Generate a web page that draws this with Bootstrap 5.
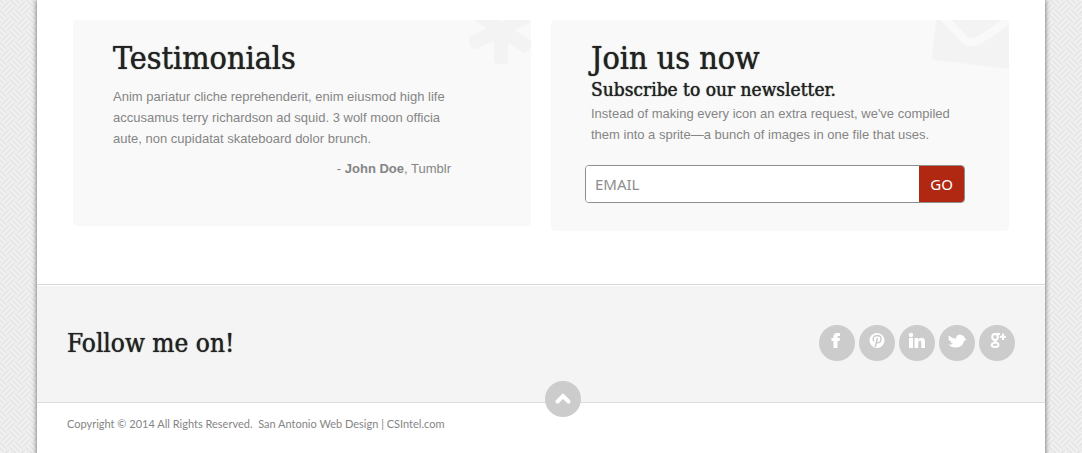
<!DOCTYPE html>
<html lang="en">
<head>
<meta charset="utf-8">
<meta name="viewport" content="width=device-width, initial-scale=1">
<title>Follow me on!</title>
<link href="https://cdn.jsdelivr.net/npm/bootstrap@5.3.0/dist/css/bootstrap.min.css" rel="stylesheet">
<style>
  body {
    font-family: "Liberation Sans", Arial, sans-serif;
    font-size: 13px;
    line-height: 21px;
    color: #858585;
    background: #f1f1f1 url("data:image/svg+xml,%3Csvg xmlns='http://www.w3.org/2000/svg' width='16' height='16' viewBox='0 0 12 12'%3E%3Cdefs%3E%3Cg id='b'%3E%3Cpath d='M-3-3L3 3M-1-5L5 1M-5-1L1 5'/%3E%3C/g%3E%3C/defs%3E%3Cg fill='none' stroke='%23e5e5e5' stroke-width='1.3'%3E%3Cpath d='M3 9L9 3M1 7L7 1M5 11L11 5'/%3E%3Cuse href='%23b'/%3E%3Cuse href='%23b' x='12'/%3E%3Cuse href='%23b' y='12'/%3E%3Cuse href='%23b' x='12' y='12'/%3E%3C/g%3E%3C/svg%3E");
  }
  .sheet { margin: 0 37px; background: #fff; box-shadow: 0 0 5px rgba(0,0,0,.6); }
  .panels { padding: 20px 36px 53px; }
  .panel { background: #f9f9f9; border-radius: 4px; padding: 20px 40px 28px; overflow: hidden; }
  .panel-short { padding-bottom: 47px; }
  .panel-art { top: 0; right: 0; fill: #f3f3f3; }
  h2, h3 { font-family: "DejaVu Serif Condensed", "DejaVu Serif", serif; font-stretch: condensed; font-weight: 400; color: #222; text-shadow: 0 0 1px #222; margin: 0; }
  .title { font-size: 32px; line-height: 36px; }
  .subtitle { font-size: 19px; line-height: 27px; }
  .quote { max-width: 338px; margin: 10px 0 9px; }
  .signup { margin: 20px 4px 0 -6px; width: auto; border: 1px solid #8e8e8e; border-radius: 4px; overflow: hidden; }
  .signup .form-control, .signup .btn { font-family: "Noto Sans", sans-serif; font-size: 15px; line-height: 20px; border: 0; border-radius: 0; }
  .signup .form-control { padding: 8px 9px; color: #555; }
  .signup .form-control::placeholder { color: #8e8e8e; opacity: 1; }
  .signup .btn { background: #b02812; color: #fff; padding: 8px 11px; font-weight: 400; }
  .signup .btn:hover { background: #962210; color: #fff; }
  .follow { background: #f4f4f4; border-top: 1px solid #d8d8d8; box-shadow: inset 0 1px #fff; border-bottom: 1px solid #dcdcdc; padding: 40px 30px 41px; }
  .follow h2 { font-size: 26px; line-height: 36px; }
  .round { width: 36px; height: 36px; background: #ccc; }
  .round:hover { background: #b8b8b8; }
  .round svg { fill: #fff; }
  .socials { gap: 4px; }
  .to-top { top: -22px; margin-left: 22px; }
  .legal { font-family: Lato, sans-serif; font-size: 11px; line-height: 20px; padding: 11px 30px 30px; }
  .legal a { color: inherit; text-decoration: none; }
</style>
</head>
<body>
<div class="sheet min-vh-100">
  <main class="panels">
    <div class="row align-items-start g-0" style="--bs-gutter-x:20px">
      <div class="col-6">
        <section class="panel panel-short position-relative">
          <svg class="panel-art position-absolute" width="62" height="46" viewBox="0 0 62 46" aria-hidden="true"><defs><rect id="arm" x="25" y="10" width="14" height="34" rx="4"/></defs><use href="#arm"/><use href="#arm" transform="rotate(66 32 10)"/><use href="#arm" transform="rotate(-58 32 10)"/><use href="#arm" transform="rotate(125 32 10)"/><use href="#arm" transform="rotate(-118 32 10)"/></svg>
          <h2 class="title">Testimonials</h2>
          <p class="quote">Anim pariatur cliche reprehenderit, enim eiusmod high life accusamus terry richardson ad squid. 3 wolf moon officia aute, non cupidatat skateboard dolor brunch.</p>
          <p class="quote text-end m-0">- <strong>John Doe</strong>, Tumblr</p>
        </section>
      </div>
      <div class="col-6">
        <section class="panel position-relative">
          <svg class="panel-art position-absolute" width="78" height="49" viewBox="0 0 78 49" aria-hidden="true"><path d="M5 0H78V49L4 40Q1 39 1 36Z"/><path d="M11 -4L31 17Q39 26 50 19L80 -1" fill="none" stroke="#f9f9f9" stroke-width="8"/></svg>
          <h2 class="title">Join us now</h2>
          <h3 class="subtitle">Subscribe to our newsletter.</h3>
          <p class="m-0">Instead of making every icon an extra request, we've compiled them into a sprite—a bunch of images in one file that uses.</p>
          <form class="input-group signup">
            <input type="email" class="form-control" placeholder="EMAIL" aria-label="Email">
            <button type="button" class="btn">GO</button>
          </form>
        </section>
      </div>
    </div>
  </main>
  <section class="follow d-flex justify-content-between align-items-center">
    <h2>Follow me on!</h2>
    <nav class="socials d-flex" aria-label="Social networks">
      <a class="round rounded-circle d-flex justify-content-center" href="#" aria-label="Facebook"><svg width="36" height="36" viewBox="0 0 36 36"><path d="M14.500 23V16H12.500V13H14.500V11.500Q14.500 8 18 8H21V11H19.500Q18.500 11 18.500 12V13H21L20.500 16H18.500V23Z"/></svg></a>
      <a class="round rounded-circle d-flex justify-content-center" href="#" aria-label="Pinterest"><svg width="36" height="36" viewBox="0 0 36 36"><circle cx="18" cy="15.500" r="7.500"/><path d="M14.800 16.500Q12.500 11 18 10.500Q22.500 10.500 22 14.500Q21.200 18.500 18 17.600M18.500 13L16.300 22" fill="none" stroke="#ccc" stroke-width="1.500"/></svg></a>
      <a class="round rounded-circle d-flex justify-content-center" href="#" aria-label="LinkedIn"><svg width="36" height="36" viewBox="0 0 36 36"><circle cx="12" cy="10" r="2.200"/><path d="M10 13H14V23H10ZM15.500 13H19V14.400Q20.200 12.700 22.300 12.700Q26 12.700 26 17V23H22.300V17.500Q22.300 15.500 20.800 15.500Q19.200 15.500 19.200 17.500V23H15.500Z"/></svg></a>
      <a class="round rounded-circle d-flex justify-content-center" href="#" aria-label="Twitter"><svg width="36" height="36" viewBox="0 0 36 36"><path d="M9.500 19.800Q12.500 20 14 18.800Q11.800 18.300 11.500 16.700H12.800Q9.700 15.500 9 13.400L10.500 13.500Q9 12 9.500 10.500Q13.500 13.500 17 13.700Q17.300 10 20.500 9.500Q22 9.300 23 10.400L25.500 11L25 12.500L27.500 14.500L25 16Q23.500 22 17.500 22.500Q12.500 22.800 9.500 19.800Z"/></svg></a>
      <a class="round rounded-circle d-flex justify-content-center" href="#" aria-label="Google Plus"><svg width="36" height="36" viewBox="0 0 36 36"><g fill="none" stroke="#fff" stroke-width="2"><ellipse cx="16" cy="12" rx="2.800" ry="3"/><path d="M16 9H21M17.500 15Q14 16 16.500 17.300C21 19 20 22 16 22C11.500 22 11.500 18 16 18M24 8.500V15M20.800 11.700H27"/></g></svg></a>
    </nav>
  </section>
  <footer class="legal position-relative">
    <a class="to-top round rounded-circle position-absolute start-50 translate-middle-x" href="#" aria-label="Back to top"><svg class="d-block" width="36" height="36" viewBox="0 0 36 36"><path d="M12.500 20.500L18 15L23.500 20.500" style="fill:none;stroke:#fff;stroke-width:4;stroke-linecap:round"/></svg></a>
    Copyright © 2014 All Rights Reserved. &nbsp;<a href="#">San Antonio Web Design</a> | <a href="#">CSIntel.com</a>
  </footer>
</div>
<script src="https://cdn.jsdelivr.net/npm/bootstrap@5.3.0/dist/js/bootstrap.bundle.min.js"></script>
</body>
</html>
